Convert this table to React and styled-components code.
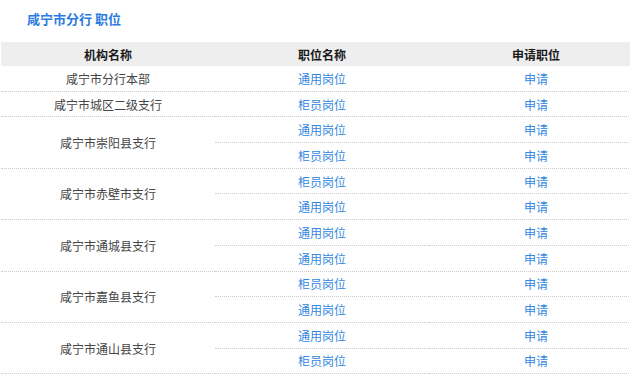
import React from "react";
import styled, { createGlobalStyle } from "styled-components";

const GlobalStyle = createGlobalStyle`
  html, body {
    margin: 0;
    padding: 0;
    background: #fff;
    overflow: hidden;
  }
  body {
    font-family: "Noto Sans CJK SC", "Noto Sans", sans-serif;
  }
`;

const Page = styled.div`
  width: 630px;
  overflow: hidden;
`;

const Title = styled.h2`
  margin: 0;
  padding: 9px 0 0 27px;
  height: 42px;
  box-sizing: border-box;
  font-size: 13px;
  line-height: 19px;
  font-weight: bold;
  color: #2a7ae2;
`;

const Table = styled.table`
  width: 642px;
  margin-left: 1px;
  border-collapse: collapse;
  table-layout: fixed;
  font-size: 12px;
`;

const HeadCell = styled.th`
  height: 24px;
  padding: 0;
  background: #eeeeee;
  color: #1a1a1a;
  font-weight: bold;
  text-align: center;
`;

const Cell = styled.td`
  height: 24.7px;
  padding: 0;
  text-align: center;
  vertical-align: middle;
  color: #444;
  border-bottom: 1px dotted #cccccc;
`;

const Link = styled.a`
  color: #3388e0;
  text-decoration: none;
  cursor: pointer;
`;

const branches = [
  { name: "咸宁市分行本部", posts: ["通用岗位"] },
  { name: "咸宁市城区二级支行", posts: ["柜员岗位"] },
  { name: "咸宁市崇阳县支行", posts: ["通用岗位", "柜员岗位"] },
  { name: "咸宁市赤壁市支行", posts: ["柜员岗位", "通用岗位"] },
  { name: "咸宁市通城县支行", posts: ["通用岗位", "通用岗位"] },
  { name: "咸宁市嘉鱼县支行", posts: ["柜员岗位", "通用岗位"] },
  { name: "咸宁市通山县支行", posts: ["通用岗位", "柜员岗位"] },
];

export default function App() {
  return (
    <Page>
      <GlobalStyle />
      <Title>咸宁市分行 职位</Title>
      <Table>
        <thead>
          <tr>
            <HeadCell>机构名称</HeadCell>
            <HeadCell>职位名称</HeadCell>
            <HeadCell>申请职位</HeadCell>
          </tr>
        </thead>
        <tbody>
          {branches.map((b) =>
            b.posts.map((post, i) => (
              <tr key={b.name + i}>
                {i === 0 && <Cell rowSpan={b.posts.length}>{b.name}</Cell>}
                <Cell>
                  <Link>{post}</Link>
                </Cell>
                <Cell>
                  <Link>申请</Link>
                </Cell>
              </tr>
            ))
          )}
        </tbody>
      </Table>
    </Page>
  );
}
